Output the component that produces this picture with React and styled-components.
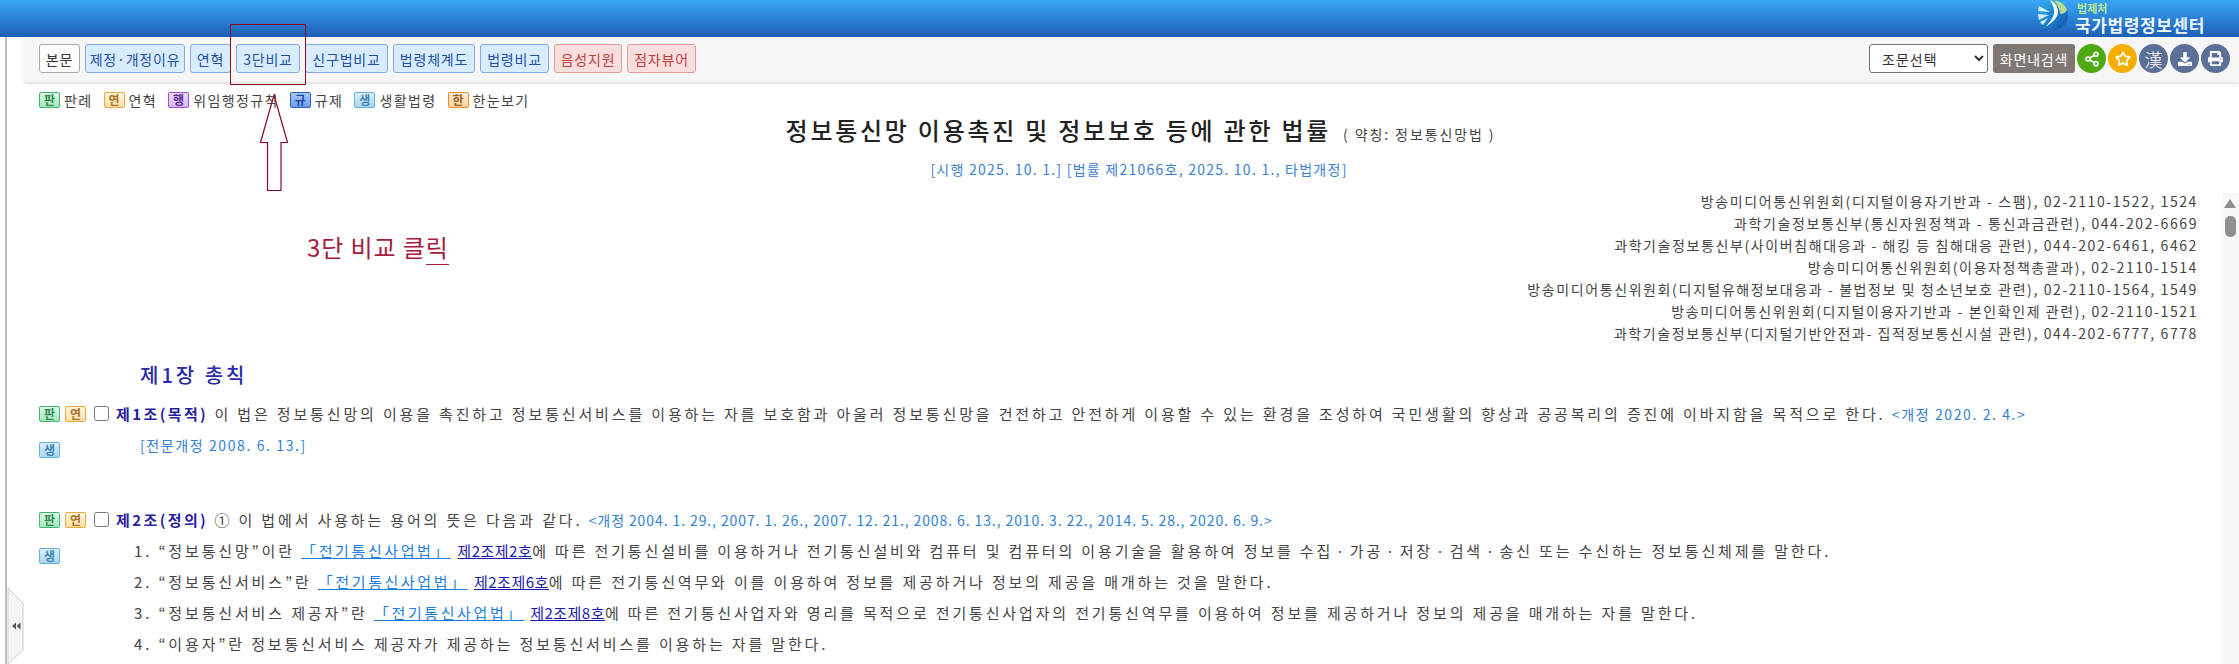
import React from "react";
import styled, { createGlobalStyle } from "styled-components";
import { Share2, Star } from "lucide-react";
import { FaDownload, FaPrint } from "react-icons/fa";

const GlobalStyle = createGlobalStyle`
  html, body {
    margin: 0;
    padding: 0;
    background: #fff;
    overflow: hidden;
  }
  body {
    font-family: "Noto Sans CJK KR", "Noto Sans", sans-serif;
    color: #444;
  }
`;

const Page = styled.div`
  position: relative;
  width: 2239px;
  height: 664px;
  overflow: hidden;
`;

const Header = styled.header`
  height: 37px;
  display: flex;
  justify-content: flex-end;
  padding-right: 34px;
  background: linear-gradient(#3aa6f7, #1d5eb3);
`;

const Logo = styled.div`
  display: flex;
  gap: 6px;
`;

const LogoText = styled.div`
  display: flex;
  flex-direction: column;
`;

const LogoSmall = styled.span`
  font-size: 11px;
  line-height: 16px;
  font-weight: 700;
  color: #b5e58e;
  margin-left: 2px;
`;

const LogoLarge = styled.span`
  font-size: 17px;
  line-height: 17px;
  font-weight: 700;
  letter-spacing: 0.6px;
  color: #eef6fd;
`;

const Body = styled.div`
  margin-left: 5px;
  padding-left: 17px;
  border-left: 2px solid #bbb;
  height: 627px;
`;

const Toolbar = styled.nav`
  height: 45px;
  box-sizing: border-box;
  display: flex;
  align-items: flex-start;
  padding: 7px 9px 0 15px;
  background: #f6f6f6;
  box-shadow: 0 2px 3px rgba(0, 0, 0, 0.12);
`;

const ButtonGroup = styled.div`
  display: flex;
  gap: 5px;
`;

const colors = {
  plain: { bg: "#fff", line: "#aaa", text: "#333" },
  blue: { bg: "#d9ecfd", line: "#86abe3", text: "#2350a5" },
  red: { bg: "#f8dedd", line: "#e29c9c", text: "#c33d3d" },
};

const ToolButton = styled.button`
  width: ${(p) => p.$w}px;
  height: 29px;
  padding: 0;
  box-sizing: border-box;
  border: 1px solid ${(p) => colors[p.$tone].line};
  border-radius: 3px;
  background: ${(p) => colors[p.$tone].bg};
  color: ${(p) => colors[p.$tone].text};
  font: 14px "Noto Sans CJK KR", sans-serif;
  letter-spacing: 0.8px;
  white-space: nowrap;
`;

const ToolRight = styled.div`
  margin-left: auto;
  display: flex;
  align-items: center;
  gap: 2px;
`;

const ArticleSelect = styled.select`
  width: 119px;
  height: 29px;
  margin-right: 3px;
  padding-left: 8px;
  border: 1px solid #767676;
  border-radius: 3px;
  background: #fff;
  color: #333;
  font: 14px "Noto Sans CJK KR", sans-serif;
  letter-spacing: 1px;
`;

const SearchButton = styled.button`
  width: 82px;
  height: 29px;
  padding: 0;
  border: none;
  border-radius: 3px;
  background: #7f7772;
  color: #fff;
  font: 14px "Noto Sans CJK KR", sans-serif;
  letter-spacing: 0.8px;
`;

const RoundButton = styled.span`
  width: 29px;
  height: 29px;
  border-radius: 50%;
  display: flex;
  align-items: center;
  justify-content: center;
  background: ${(p) => p.$bg};
  color: #fff;
  font-size: 18px;
  font-weight: 300;
`;

const Legend = styled.div`
  display: flex;
  align-items: center;
  height: 16px;
  margin: 10px 0 0 15px;
  gap: 11px;
`;

const LegendItem = styled.span`
  display: flex;
  align-items: center;
  gap: 4px;
  font-size: 14px;
  letter-spacing: 1.4px;
  color: #444;
  white-space: nowrap;
`;

const badgeColors = {
  green: ["#e0f8e6", "#a5e6b9", "#3db872", "#2d8a54"],
  yellow: ["#fff5dc", "#fde0a8", "#e9a93f", "#a9742a"],
  purple: ["#eadcfb", "#d4b8f5", "#a04ddc", "#5c2a90"],
  navy: ["#a9c8f5", "#6f9fe8", "#2a5fc4", "#1c48a8"],
  sky: ["#dcf0fb", "#a9d6f0", "#62b0dc", "#3f85b0"],
  orange: ["#ffeedd", "#fdcf9f", "#ee8b28", "#9a6020"],
};

const Badge = styled.span`
  flex: none;
  width: 21px;
  height: 16px;
  box-sizing: border-box;
  display: inline-flex;
  align-items: center;
  justify-content: center;
  border: 1px solid ${(p) => badgeColors[p.$tone][2]};
  border-radius: 2px;
  background: linear-gradient(${(p) => badgeColors[p.$tone][0]}, ${(p) => badgeColors[p.$tone][1]});
  color: ${(p) => badgeColors[p.$tone][3]};
  font-size: 12px;
  font-weight: 700;
  line-height: 1;
  letter-spacing: 0;
`;

const TitleBlock = styled.div`
  padding-left: 15px;
  text-align: center;
`;

const LawTitle = styled.h1`
  margin: 8px 0 0 3px;
  height: 27px;
  font-size: 24px;
  line-height: 27px;
  font-weight: 500;
  letter-spacing: 2.75px;
  color: #222;
  white-space: nowrap;
`;

const ShortName = styled.span`
  margin-left: 12px;
  font-size: 14px;
  font-weight: 400;
  letter-spacing: 1.9px;
  color: #444;
`;

const Enforcement = styled.div`
  margin-top: 16px;
  font-size: 14px;
  line-height: 20px;
  letter-spacing: 1.25px;
  color: #3a80cf;
`;

const Contacts = styled.ul`
  list-style: none;
  margin: 11px 41px 0 0;
  padding: 0;
  text-align: right;
`;

const Contact = styled.li`
  height: 22px;
  font-size: 14px;
  line-height: 22px;
  letter-spacing: 1.6px;
  color: #444;
  white-space: nowrap;
`;

const Chapter = styled.h2`
  margin: 16px 0 0 116px;
  height: 30px;
  font-size: 20px;
  line-height: 30px;
  font-weight: 500;
  letter-spacing: 3px;
  color: #2a2aa8;
`;

const Article = styled.section`
  display: grid;
  grid-template-columns: 55px 22px 1fr;
  grid-auto-rows: 31px;
  margin: ${(p) => p.$top}px 0 0 15px;
  font-size: 15px;
  line-height: 31px;
  letter-spacing: 2.85px;
  color: #444;
  white-space: nowrap;
`;

const Badges = styled.div`
  display: flex;
  align-items: center;
  gap: 5px;
`;

const LowerBadge = styled.div`
  grid-column: 1;
  padding-top: 13px;
  display: flex;
  align-items: flex-start;
`;

const Check = styled.input.attrs({ type: "checkbox" })`
  width: 15px;
  height: 15px;
  margin: 8px 0 0;
`;

const ArticleHead = styled.strong`
  font-weight: 700;
  letter-spacing: 2.4px;
  color: #2a1fa0;
`;

const Line = styled.div`
  grid-column: 3;
  padding-left: ${(p) => p.$indent || 0}px;
`;

const Amend = styled.span`
  font-size: 14px;
  letter-spacing: ${(p) => (p.$tight ? 0.9 : 1.6)}px;
  color: #2f7fd6;
`;

const LawLink = styled.a`
  letter-spacing: ${(p) => (p.$dark ? 0.5 : 2.6)}px;
  color: ${(p) => (p.$dark ? "#1a1ab0" : "#1c7ee0")};
  text-decoration: underline;
`;

const Annotation = styled.div`
  position: absolute;
  left: 307px;
  top: 231px;
  font-size: 24px;
  line-height: 32px;
  letter-spacing: 0.9px;
  color: #a3203c;
  white-space: nowrap;
`;

const AnnotationUnderline = styled.span`
  border-bottom: 1px solid #a3203c;
`;

const RedBox = styled.div`
  position: absolute;
  left: 230px;
  top: 24px;
  width: 74px;
  height: 59px;
  border: 1px solid #8a0a24;
`;

const ArrowDrawing = styled.svg`
  position: absolute;
  left: 258px;
  top: 92px;
`;

const Handle = styled.svg`
  position: absolute;
  left: 7px;
  top: 588px;
`;

const ScrollStrip = styled.div`
  position: absolute;
  right: 0;
  top: 193px;
  bottom: 0;
  width: 17px;
  background: #f8f8f8;
`;

const ScrollArrow = styled.div`
  position: absolute;
  left: 2px;
  top: 6px;
  border-left: 6.5px solid transparent;
  border-right: 6.5px solid transparent;
  border-bottom: 9px solid #8f8f8f;
`;

const ScrollThumb = styled.div`
  position: absolute;
  left: 3px;
  top: 23px;
  width: 11px;
  height: 21px;
  border-radius: 5px;
  background: #8f8f8f;
`;

const buttons = [
  ["본문", "plain", 41],
  ["제정·개정이유", "blue", 100],
  ["연혁", "blue", 41],
  ["3단비교", "blue", 64],
  ["신구법비교", "blue", 83],
  ["법령체계도", "blue", 82],
  ["법령비교", "blue", 69],
  ["음성지원", "red", 68],
  ["점자뷰어", "red", 69],
];

const legend = [
  ["판", "green", "판례"],
  ["연", "yellow", "연혁"],
  ["행", "purple", "위임행정규칙"],
  ["규", "navy", "규제"],
  ["생", "sky", "생활법령"],
  ["한", "orange", "한눈보기"],
];

const contacts = [
  "방송미디어통신위원회(디지털이용자기반과 - 스팸), 02-2110-1522, 1524",
  "과학기술정보통신부(통신자원정책과 - 통신과금관련), 044-202-6669",
  "과학기술정보통신부(사이버침해대응과 - 해킹 등 침해대응 관련), 044-202-6461, 6462",
  "방송미디어통신위원회(이용자정책총괄과), 02-2110-1514",
  "방송미디어통신위원회(디지털유해정보대응과 - 불법정보 및 청소년보호 관련), 02-2110-1564, 1549",
  "방송미디어통신위원회(디지털이용자기반과 - 본인확인제 관련), 02-2110-1521",
  "과학기술정보통신부(디지털기반안전과- 집적정보통신시설 관련), 044-202-6777, 6778",
];

function LogoMark() {
  return (
    <svg width="32" height="32" viewBox="0 0 32 32">
      <defs>
        <linearGradient id="globe" x1="0" y1="0" x2="1" y2="1">
          <stop offset="0" stopColor="#2fb4f0" />
          <stop offset="1" stopColor="#0f50a8" />
        </linearGradient>
      </defs>
      <circle cx="16" cy="15.5" r="15" fill="url(#globe)" />
      <path d="M17 .6c6 .4 11 4 13 9-1 3-4 5-7 4 0-5-3-9-6-13z" fill="#b7dc8e" />
      <path d="M15 .6c4 3 6 7 6 11 0 6-5 11-12 15 3-4 7-8 8-13 .6-4-1-9-4-13z" fill="#fff" opacity="0.92" />
      <path d="M2 6l11 6-12-1zM1 14l11 1-10 5zM3 22l8-4-5 7z" fill="#e6f5fd" opacity="0.9" />
    </svg>
  );
}

function ArticleBadges() {
  return (
    <Badges>
      <Badge $tone="green">판</Badge>
      <Badge $tone="yellow">연</Badge>
    </Badges>
  );
}

export default function App() {
  return (
    <Page>
      <GlobalStyle />
      <Header>
        <Logo>
          <LogoMark />
          <LogoText>
            <LogoSmall>법제처</LogoSmall>
            <LogoLarge>국가법령정보센터</LogoLarge>
          </LogoText>
        </Logo>
      </Header>
      <Body>
        <Toolbar>
          <ButtonGroup>
            {buttons.map(([label, tone, w]) => (
              <ToolButton key={label} $tone={tone} $w={w}>
                {label}
              </ToolButton>
            ))}
          </ButtonGroup>
          <ToolRight>
            <ArticleSelect defaultValue="조문선택">
              <option>조문선택</option>
            </ArticleSelect>
            <SearchButton>화면내검색</SearchButton>
            <RoundButton $bg="#4eaa12">
              <Share2 size={16} strokeWidth={2.4} />
            </RoundButton>
            <RoundButton $bg="#f5ae00">
              <Star size={16} strokeWidth={2.6} />
            </RoundButton>
            <RoundButton $bg="#5c6f96">漢</RoundButton>
            <RoundButton $bg="#5c6f96">
              <FaDownload size={14} />
            </RoundButton>
            <RoundButton $bg="#5c6f96">
              <FaPrint size={15} />
            </RoundButton>
          </ToolRight>
        </Toolbar>
        <Legend>
          {legend.map(([mark, tone, label]) => (
            <LegendItem key={label}>
              <Badge $tone={tone}>{mark}</Badge>
              {label}
            </LegendItem>
          ))}
        </Legend>
        <TitleBlock>
          <LawTitle>
            정보통신망 이용촉진 및 정보보호 등에 관한 법률
            <ShortName>( 약칭: 정보통신망법 )</ShortName>
          </LawTitle>
          <Enforcement>[시행 2025. 10. 1.] [법률 제21066호, 2025. 10. 1., 타법개정]</Enforcement>
        </TitleBlock>
        <Contacts>
          {contacts.map((text) => (
            <Contact key={text}>{text}</Contact>
          ))}
        </Contacts>
        <Chapter>제1장 총칙</Chapter>
        <Article $top={8}>
          <ArticleBadges />
          <Check />
          <Line>
            <ArticleHead>제1조(목적)</ArticleHead> 이 법은 정보통신망의 이용을 촉진하고 정보통신서비스를 이용하는 자를 보호함과 아울러
            정보통신망을 건전하고 안전하게 이용할 수 있는 환경을 조성하여 국민생활의 향상과 공공복리의 증진에 이바지함을 목적으로 한다.{" "}
            <Amend>&lt;개정 2020. 2. 4.&gt;</Amend>
          </Line>
          <LowerBadge>
            <Badge $tone="sky">생</Badge>
          </LowerBadge>
          <Line $indent={24}>
            <Amend>[전문개정 2008. 6. 13.]</Amend>
          </Line>
        </Article>
        <Article $top={44}>
          <ArticleBadges />
          <Check />
          <Line>
            <ArticleHead>제2조(정의)</ArticleHead> ① 이 법에서 사용하는 용어의 뜻은 다음과 같다.{" "}
            <Amend $tight>&lt;개정 2004. 1. 29., 2007. 1. 26., 2007. 12. 21., 2008. 6. 13., 2010. 3. 22., 2014. 5. 28., 2020. 6. 9.&gt;</Amend>
          </Line>
          <LowerBadge>
            <Badge $tone="sky">생</Badge>
          </LowerBadge>
          <Line $indent={18}>
            1. “정보통신망”이란 <LawLink>「전기통신사업법」</LawLink> <LawLink $dark>제2조제2호</LawLink>에 따른 전기통신설비를 이용하거나
            전기통신설비와 컴퓨터 및 컴퓨터의 이용기술을 활용하여 정보를 수집ㆍ가공ㆍ저장ㆍ검색ㆍ송신 또는 수신하는 정보통신체제를 말한다.
          </Line>
          <Line $indent={18}>
            2. “정보통신서비스”란 <LawLink>「전기통신사업법」</LawLink> <LawLink $dark>제2조제6호</LawLink>에 따른 전기통신역무와 이를 이용하여
            정보를 제공하거나 정보의 제공을 매개하는 것을 말한다.
          </Line>
          <Line $indent={18}>
            3. “정보통신서비스 제공자”란 <LawLink>「전기통신사업법」</LawLink> <LawLink $dark>제2조제8호</LawLink>에 따른 전기통신사업자와 영리를
            목적으로 전기통신사업자의 전기통신역무를 이용하여 정보를 제공하거나 정보의 제공을 매개하는 자를 말한다.
          </Line>
          <Line $indent={18}>4. “이용자”란 정보통신서비스 제공자가 제공하는 정보통신서비스를 이용하는 자를 말한다.</Line>
        </Article>
      </Body>

      <RedBox />
      <ArrowDrawing width="32" height="100" viewBox="0 0 32 100">
        <path d="M16 3 L29.5 50.5 H23 V98.5 H9.5 V50.5 H2.5 Z" fill="none" stroke="#8a0a24" strokeWidth="1.2" />
      </ArrowDrawing>
      <Annotation>
        3단 비교 클<AnnotationUnderline>릭</AnnotationUnderline>
      </Annotation>
      <Handle width="17" height="76" viewBox="0 0 17 76">
        <path d="M1 0 L16 15 V62 L1 76 Z" fill="#f4f4f4" stroke="#ccc" />
        <path d="M5 38 L9 34.5 V41.5 Z M9.5 38 L13.5 34.5 V41.5 Z" fill="#555" />
      </Handle>
      <ScrollStrip>
        <ScrollArrow />
        <ScrollThumb />
      </ScrollStrip>
    </Page>
  );
}
